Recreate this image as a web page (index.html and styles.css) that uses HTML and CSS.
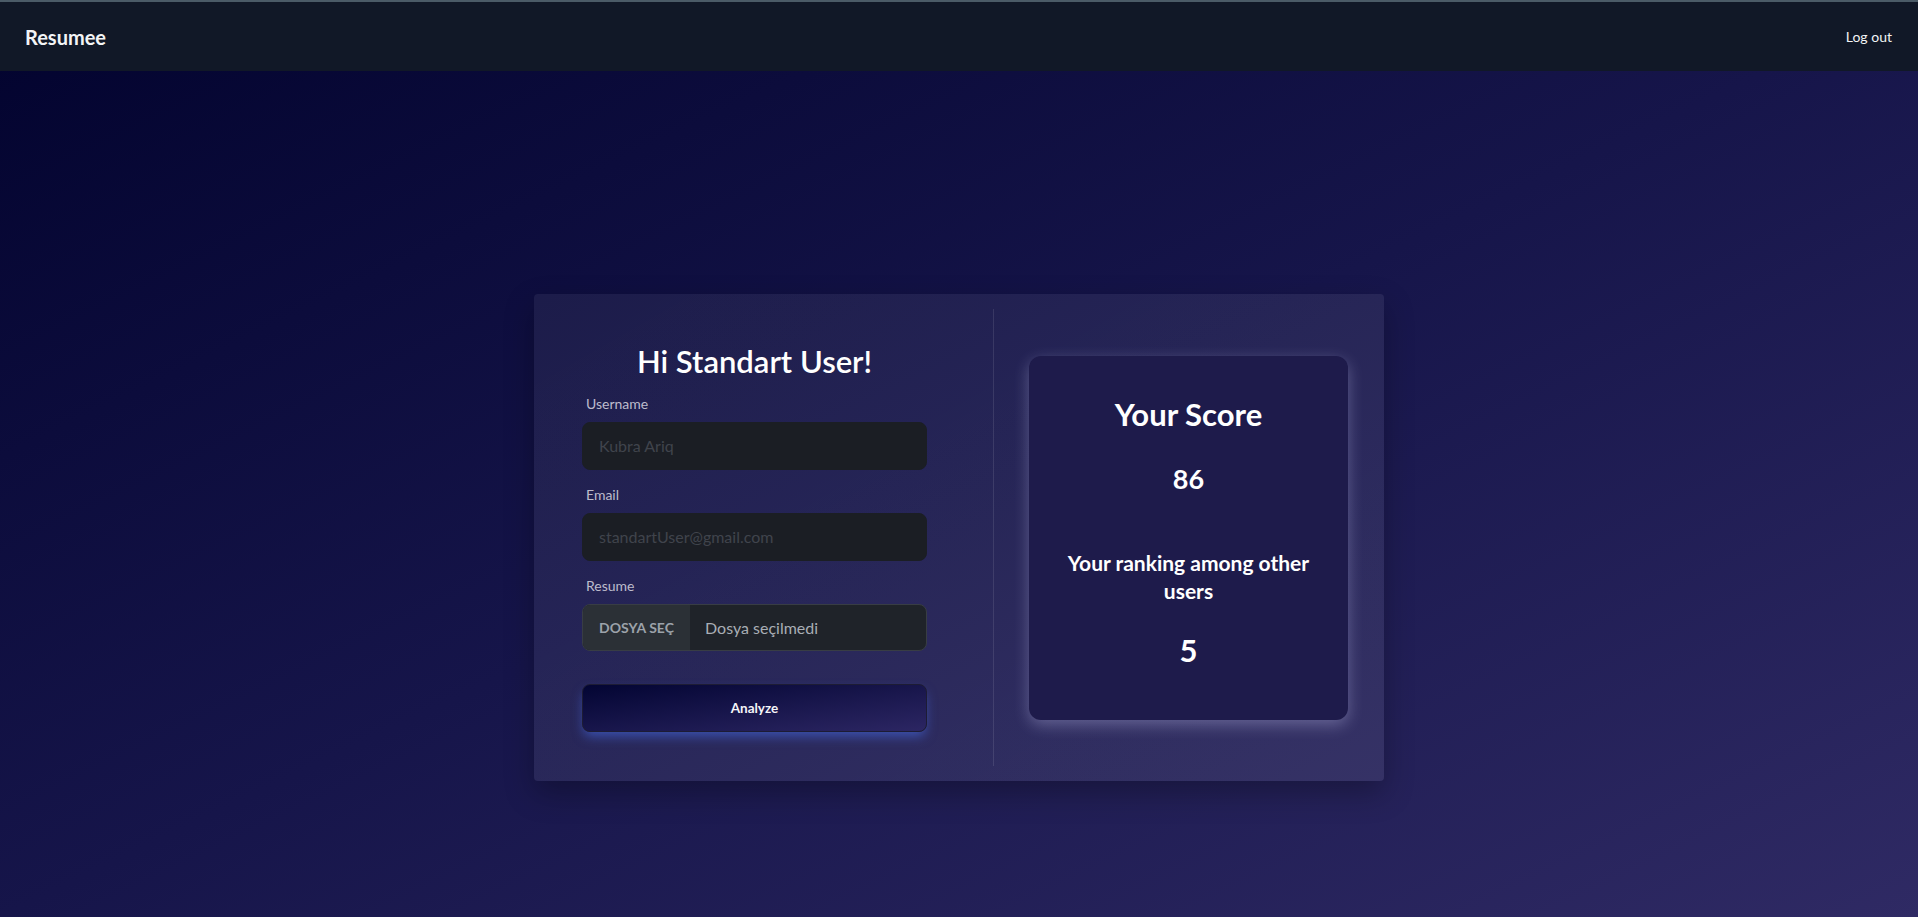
FILE: index.html
```html
<!DOCTYPE html>
<html lang="en">
<head>
<meta charset="utf-8">
<title>Resumee</title>
<link rel="stylesheet" href="styles.css">
</head>
<body>
<header class="navbar">
  <a class="brand" href="#">Resumee</a>
  <a class="logout" href="#">Log out</a>
</header>
<main class="page">
  <section class="card">
    <div class="col-left">
      <form class="form">
        <h2 class="title">Hi Standart User!</h2>
        <label class="label">Username</label>
        <input class="input" type="text" placeholder="Kubra Ariq">
        <label class="label">Email</label>
        <input class="input" type="text" placeholder="standartUser@gmail.com">
        <label class="label">Resume</label>
        <div class="file">
          <span class="file-btn">DOSYA SEÇ</span>
          <span class="file-name">Dosya seçilmedi</span>
        </div>
        <button class="analyze" type="button">Analyze</button>
      </form>
    </div>
    <div class="col-right">
      <div class="score">
        <h2 class="score-title">Your Score</h2>
        <div class="score-value">86</div>
        <h5 class="rank-title">Your ranking among other users</h5>
        <div class="rank-value">5</div>
      </div>
    </div>
  </section>
</main>
</body>
</html>
```
FILE: styles.css
```css
* { box-sizing: border-box; }
html, body { margin: 0; padding: 0; }
body {
  font-family: Lato, "Noto Sans", sans-serif;
  color: #fff;
  min-height: 917px;
  background: linear-gradient(to bottom right, #02032e 0%, #16154a 50%, #2f2a64 100%);
  border-top: 2px solid #4b5b67;
}
.navbar {
  height: 69px;
  background: #111827;
  display: flex;
  align-items: center;
  justify-content: space-between;
  padding: 0 26px 0 25px;
}
.brand {
  color: #f3f4f6;
  font-size: 20px;
  font-weight: 700;
  text-decoration: none;
  line-height: 24px;
}
.logout {
  color: #f3f4f6;
  font-size: 14px;
  text-decoration: none;
  line-height: 20px;
}
.page {
  padding-top: 223px;
  padding-bottom: 136px;
}
.card {
  width: 850px;
  margin: 0 auto;
  padding: 15px;
  border-radius: 4px;
  background: linear-gradient(to bottom right, rgba(255,255,255,0.06), rgba(255,255,255,0.08));
  box-shadow: 0 12px 30px rgba(0,0,0,0.28);
  display: grid;
  grid-template-columns: 445px 1fr;
  height: 487px;
}
.col-left {
  border-right: 1px solid rgba(255,255,255,0.1);
  display: flex;
  align-items: center;
  padding-left: 33px;
}
.form {
  width: 345px;
  display: flex;
  flex-direction: column;
  margin-top: -2px;
}
.title {
  margin: 0 0 13px;
  font-size: 31px;
  font-weight: 600;
  line-height: 38px;
  text-align: center;
  color: #fff;
}
.label {
  font-size: 14px;
  line-height: 21px;
  color: #bdbccc;
  padding-left: 4px;
  margin-bottom: 8px;
}
.input {
  height: 48px;
  border: 1px solid #1b1e24;
  border-radius: 8px;
  background: #1b1e24;
  padding: 0 16px;
  font-family: inherit;
  font-size: 16px;
  color: #ddd;
  margin-bottom: 14px;
  outline: none;
}
.input::placeholder { color: #40444c; }
.file {
  height: 47px;
  display: flex;
  border: 1px solid #383d44;
  border-radius: 8px;
  overflow: hidden;
  background: #1f2329;
}
.file-btn {
  width: 107px;
  background: #2b3036;
  color: #9ca2aa;
  font-size: 14px;
  font-weight: 700;
  display: flex;
  align-items: center;
  justify-content: center;
}
.file-name {
  display: flex;
  align-items: center;
  padding-left: 15px;
  font-size: 16px;
  color: #a9aeb5;
}
.analyze {
  margin-top: 33px;
  height: 48px;
  border: 1px solid #1d1c34;
  border-radius: 8px;
  background: linear-gradient(to bottom right, #030533, #2c2663);
  color: #f4f4f8;
  font-family: inherit;
  font-size: 13.5px;
  font-weight: 700;
  box-shadow: 0 6px 12px -2px rgba(70, 110, 235, 0.6);
}
.col-right {
  display: flex;
  align-items: center;
  padding-left: 35px;
}
.score {
  width: 319px;
  height: 364px;
  border-radius: 12px;
  background: #1e1b4b;
  box-shadow: 0 5px 16px rgba(210, 210, 255, 0.32);
  padding-top: 40px;
  display: flex;
  flex-direction: column;
  align-items: center;
  text-align: center;
}
.score-title {
  margin: 0;
  font-size: 31px;
  line-height: 36px;
  font-weight: 700;
}
.score-value {
  margin-top: 32px;
  font-size: 27px;
  line-height: 30px;
  font-weight: 700;
}
.rank-title {
  margin: 55px 0 0;
  width: 280px;
  font-size: 21px;
  line-height: 28px;
  font-weight: 700;
}
.rank-value {
  margin-top: 27px;
  font-size: 31px;
  line-height: 36px;
  font-weight: 700;
}
```
